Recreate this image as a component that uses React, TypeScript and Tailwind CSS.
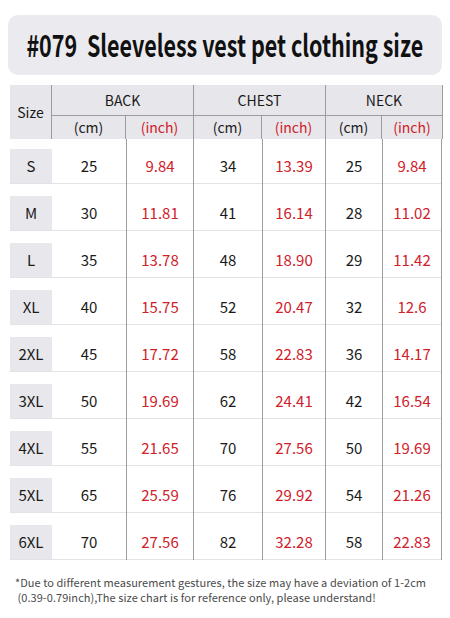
import { useLayoutEffect, useRef, useState } from "react";

const rows = [
  ["S", "25", "9.84", "34", "13.39", "25", "9.84"],
  ["M", "30", "11.81", "41", "16.14", "28", "11.02"],
  ["L", "35", "13.78", "48", "18.90", "29", "11.42"],
  ["XL", "40", "15.75", "52", "20.47", "32", "12.6"],
  ["2XL", "45", "17.72", "58", "22.83", "36", "14.17"],
  ["3XL", "50", "19.69", "62", "24.41", "42", "16.54"],
  ["4XL", "55", "21.65", "70", "27.56", "50", "19.69"],
  ["5XL", "65", "25.59", "76", "29.92", "54", "21.26"],
  ["6XL", "70", "27.56", "82", "32.28", "58", "22.83"],
];

// column widths: size | back cm | back inch | chest cm | chest inch | neck cm | neck inch
const cols = "grid grid-cols-[42px_74px_67px_69px_63px_57px_60px]";

// condensed title: no narrow font installed, so squeeze it to the target width
function Title() {
  const ref = useRef<HTMLSpanElement>(null);
  const [sx, setSx] = useState(1);
  useLayoutEffect(() => {
    if (ref.current) setSx(397 / ref.current.offsetWidth);
  }, []);
  return (
    <span
      ref={ref}
      className="inline-block whitespace-pre text-[30px] font-semibold leading-none text-[#111] origin-center"
      style={{ transform: `scaleX(${sx})` }}
    >
      #079  Sleeveless vest pet clothing size
    </span>
  );
}

export default function App() {
  return (
    <div
      className="w-[450px] h-[618px] bg-white overflow-hidden text-[#1a1a1a]"
      style={{ fontFamily: '"Noto Sans CJK SC", "Noto Sans", sans-serif' }}
    >
      <div className="pt-[15px] px-[8px]">
        <div className="h-[60px] w-[434px] rounded-[10px] bg-[#ebebef] flex items-center justify-center pb-[2px]">
          <Title />
        </div>
      </div>

      <div className="mt-[10px] ml-[10px] w-[433px]">
        {/* header */}
        <div className="flex bg-[#e7e7eb] h-[54px] border-r border-[#9c9c9c]">
          <div className="w-[42px] flex items-center justify-center text-[14px] border-r border-[#9c9c9c]">
            Size
          </div>
          {[
            ["BACK", 74, 67],
            ["CHEST", 69, 63],
            ["NECK", 57, 60],
          ].map(([name, a, b], i) => (
            <div
              key={name as string}
              className={`flex flex-col ${i < 2 ? "border-r border-[#9c9c9c]" : ""}`}
            >
              <div className="h-[31px] flex items-center justify-center text-[14px] border-b border-[#9c9c9c]">
                {name}
              </div>
              <div className="flex flex-1 text-[14px]">
                <div style={{ width: (a as number) - (i === 0 ? 0 : 1) }} className="flex items-center justify-center border-r border-[#9c9c9c]">
                  (cm)
                </div>
                <div style={{ width: b as number }} className="flex items-center justify-center text-[#d0202a]">
                  (inch)
                </div>
              </div>
            </div>
          ))}
        </div>

        {/* body */}
        {rows.map((r, ri) => (
          <div key={r[0]} className={`${cols} text-[15px] ${ri === 0 ? "h-[45px]" : "h-[47px]"}`}>
            <div className="flex flex-col justify-end">
              <div className="h-[34px] bg-[#e8e8ec] flex items-center justify-center">{r[0]}</div>
              <div className="h-px bg-[#e3e3e7]" />
            </div>
            {r.slice(1).map((v, ci) => (
              <div
                key={ci}
                className={`flex flex-col justify-end ${ci > 0 ? "border-l border-[#9c9c9c]" : ""} ${ci === 5 ? "border-r" : ""}`}
              >
                <div className={`h-[34px] flex items-center justify-center ${ci % 2 === 1 ? "text-[#d0202a]" : ""}`}>
                  {v}
                </div>
                <div className="h-px bg-[#e3e3e7]" />
              </div>
            ))}
          </div>
        ))}
      </div>

      <p className="mt-[15px] pl-[15px] text-[11px] leading-[15px] text-[#4a4a4a] tracking-[0.05px] whitespace-nowrap">
        *Due to different measurement gestures, the size may have a deviation of 1-2cm
        <br />
        &nbsp;(0.39-0.79inch),The size chart is for reference only, please understand!
      </p>
    </div>
  );
}
